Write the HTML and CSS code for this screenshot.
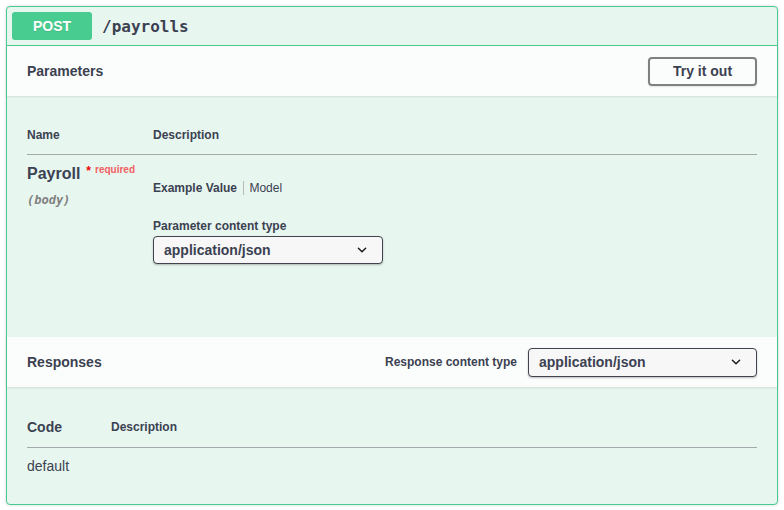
FILE: index.html
```html
<!DOCTYPE html>
<html lang="en">
<head>
    <meta charset="UTF-8">
    <title>POST /payrolls</title>
    <link rel="stylesheet" href="styles.css">
</head>
<body>
    <div class="opblock">
        <!-- summary -->
        <div class="summary">
            <span class="method">POST</span>
            <span class="path">/payrolls</span>
        </div>

        <!-- parameters -->
        <div class="section-header">
            <h4 class="section-title">Parameters</h4>
            <button class="btn-try">Try it out</button>
        </div>
        <div class="params-body">
            <table class="params-table">
                <thead>
                    <tr>
                        <th class="col-name">Name</th>
                        <th>Description</th>
                    </tr>
                </thead>
                <tbody>
                    <tr>
                        <td class="col-name">
                            <div class="param-name">Payroll<span class="star">*</span><span class="required">required</span></div>
                            <div class="param-in">(body)</div>
                        </td>
                        <td class="param-desc">
                            <div class="tabs">
                                <span class="tab active">Example Value</span>
                                <span class="tab">Model</span>
                            </div>
                            <div class="content-label">Parameter content type</div>
                            <div class="select select-param">
                                <span>application/json</span>
                                <svg width="12" height="12" viewBox="0 0 20 20"><path d="M4 7l6 6 6-6" fill="none" stroke="#1a1a1a" stroke-width="2.4" stroke-linecap="round" stroke-linejoin="round"/></svg>
                            </div>
                        </td>
                    </tr>
                </tbody>
            </table>
        </div>

        <!-- responses -->
        <div class="section-header">
            <h4 class="section-title">Responses</h4>
            <div class="response-type">
                <span class="content-label inline">Response content type</span>
                <div class="select select-response">
                    <span>application/json</span>
                    <svg width="12" height="12" viewBox="0 0 20 20"><path d="M4 7l6 6 6-6" fill="none" stroke="#1a1a1a" stroke-width="2.4" stroke-linecap="round" stroke-linejoin="round"/></svg>
                </div>
            </div>
        </div>
        <div class="responses-body">
            <table class="responses-table">
                <thead>
                    <tr>
                        <th class="col-code">Code</th>
                        <th class="col-desc">Description</th>
                    </tr>
                </thead>
                <tbody>
                    <tr>
                        <td class="col-code">default</td>
                        <td></td>
                    </tr>
                </tbody>
            </table>
        </div>
    </div>
</body>
</html>
```

FILE: styles.css
```css
* {
    margin: 0;
    padding: 0;
    box-sizing: border-box;
}

body {
    font-family: 'Liberation Sans', Arial, sans-serif;
    color: #3b4151;
    background: #fff;
    padding: 6px;
}

.opblock {
    border: 1px solid #49cc90;
    border-radius: 4px;
    background: #e8f6f0;
    box-shadow: 0 0 3px rgba(0,0,0,0.19);
    width: 772px;
}

/* 顶部 summary */
.summary {
    display: flex;
    align-items: center;
    padding: 5px;
    border-bottom: 1px solid #49cc90;
}

.method {
    background: #49cc90;
    color: #fff;
    font-size: 14px;
    font-weight: bold;
    width: 80px;
    height: 28px;
    line-height: 28px;
    text-align: center;
    border-radius: 3px;
    text-shadow: 0 1px 0 rgba(0,0,0,0.1);
}

.path {
    font-family: 'DejaVu Sans Mono', monospace;
    font-size: 16px;
    font-weight: bold;
    padding: 0 10px;
}

/* section header */
.section-header {
    display: flex;
    align-items: center;
    justify-content: space-between;
    height: 50px;
    padding: 0 20px;
    background: rgba(255,255,255,0.8);
    box-shadow: 0 1px 2px rgba(0,0,0,0.1);
}

.section-title {
    font-size: 14px;
    font-weight: bold;
}

.btn-try {
    font-family: inherit;
    font-size: 14px;
    font-weight: bold;
    color: #3b4151;
    background: transparent;
    border: 2px solid #808080;
    border-radius: 4px;
    width: 109px;
    height: 29px;
    box-shadow: 0 1px 2px rgba(0,0,0,0.1);
}

/* 参数表 */
.params-body {
    height: 241px;
    padding: 20px 20px 0;
}

table {
    width: 100%;
    border-collapse: collapse;
}

th {
    text-align: left;
    font-size: 12px;
    font-weight: bold;
    padding: 12px 0;
    line-height: 14px;
    border-bottom: 1px solid #a4a9ad;
}

td {
    vertical-align: top;
    text-align: left;
}

.params-table .col-name {
    width: 126px;
}

.params-table td {
    padding: 10px 10px 10px 0;
}

.param-name {
    font-size: 16px;
    font-weight: bold;
    line-height: 18px;
    white-space: nowrap;
}

.star {
    color: #e00;
    font-size: 12px;
    position: relative;
    top: -4px;
    margin-left: 6px;
}

.required {
    color: #f06060;
    font-size: 10px;
    position: relative;
    top: -6px;
    margin-left: 4px;
}

.param-in {
    font-family: 'DejaVu Sans Mono', monospace;
    font-size: 12px;
    font-style: italic;
    font-weight: bold;
    color: #808080;
    margin-top: 8px;
}

.param-desc {
    padding-top: 26px !important;
}

.tabs {
    font-size: 12px;
    line-height: 14px;
}

.tab + .tab {
    border-left: 1px solid #b8bbc0;
    padding-left: 5px;
    margin-left: 3px;
}

.tab.active {
    font-weight: bold;
}

.content-label {
    font-size: 12px;
    font-weight: bold;
    line-height: 14px;
    margin-top: 24px;
    margin-bottom: 3px;
}

.content-label.inline {
    margin: 0 11px 0 0;
}

.select {
    display: flex;
    align-items: center;
    justify-content: space-between;
    height: 28px;
    padding: 0 14px 0 10px;
    border: 1px solid #41444e;
    border-radius: 4px;
    background: #f7f7f7;
    box-shadow: 0 1px 2px 0 rgba(0,0,0,0.25);
    font-size: 14px;
    font-weight: bold;
}

.select-param {
    width: 230px;
}

.select-response {
    width: 229px;
    height: 29px;
}

.response-type {
    display: flex;
    align-items: center;
}

/* 响应表 */
.responses-body {
    height: 117px;
    padding: 20px 20px 0;
}

.responses-table th {
    padding: 12px 0;
    line-height: 16px;
}

.responses-table .col-code {
    width: 84px;
    font-size: 14px;
}

.responses-table td {
    padding: 10px 0;
    font-size: 14px;
    line-height: 16px;
}
```
